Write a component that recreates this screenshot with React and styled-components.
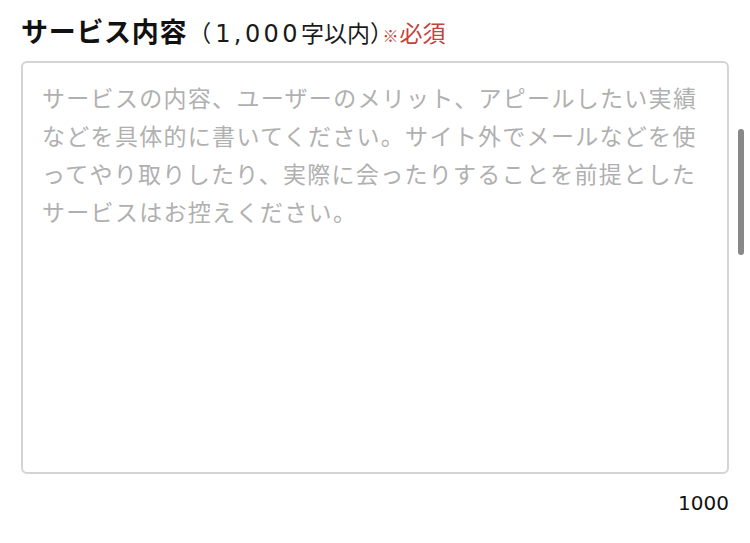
import React from 'react';
import styled, { createGlobalStyle } from 'styled-components';

const GlobalStyle = createGlobalStyle`
    html, body {
        margin: 0;
        padding: 0;
        background: #ffffff;
    }
    body {
        font-family: "Noto Sans CJK JP", "Noto Sans", sans-serif;
        color: #111111;
    }
`;

const MAX = 1000;

const placeholder =
    'サービスの内容、ユーザーのメリット、アピールしたい実績などを具体的に書いてください。サイト外でメールなどを使ってやり取りしたり、実際に会ったりすることを前提としたサービスはお控えください。';

function App() {
    const [text, setText] = React.useState('');

    return (
        <Page>
            <GlobalStyle />
            <Field>
                <Title>
                    <Label>サービス内容</Label>
                    <Limit>
                        <Open>（</Open>
                        <Num>1,000</Num>字以内
                        <Close>）</Close>
                    </Limit>
                    <Required>
                        <Mark>※</Mark>必須
                    </Required>
                </Title>
                <TextBox
                    value={text}
                    maxLength={MAX}
                    placeholder={placeholder}
                    onChange={(e) => setText(e.target.value)}
                />
                <Counter>{MAX - text.length}</Counter>
            </Field>
            <ScrollThumb />
        </Page>
    );
}

export default App;

const Page = styled.div`
    position: relative;
    width: 750px;
    height: 543px;
    overflow: hidden;
`;

const Field = styled.div`
    display: flex;
    flex-direction: column;
    width: 708px;
    padding: 14px 0 0 21px;
`;

const Title = styled.div`
    display: flex;
    align-items: baseline;
    height: 34px;
    line-height: 34px;
    white-space: nowrap;
`;

const Label = styled.span`
    font-size: 27px;
    font-weight: 700;
    letter-spacing: 0.7px;
    color: #111111;
`;

const Limit = styled.span`
    font-size: 23px;
    font-weight: 400;
    color: #1a1a1a;
`;

const Open = styled.span`
    display: inline-block;
    width: 28px;
    padding-right: 4px;
    box-sizing: border-box;
    text-align: right;
`;

const Close = styled.span`
    font-feature-settings: "halt";
    margin-right: 1px;
`;

const Num = styled.span`
    font-family: "DejaVu Sans", sans-serif;
    font-size: 24px;
    letter-spacing: 3.4px;
`;

const Required = styled.span`
    font-size: 23px;
    color: #c4433a;
`;

const Mark = styled.span`
    font-size: 16px;
    margin-right: 1px;
`;

const TextBox = styled.textarea`
    box-sizing: border-box;
    width: 708px;
    height: 413px;
    margin-top: 13px;
    padding: 15px 17px 15px 19px;
    border: 2px solid #d4d4d4;
    border-radius: 6px;
    background: #ffffff;
    font-family: "Noto Sans CJK JP", sans-serif;
    font-size: 23px;
    line-height: 38px;
    letter-spacing: 1.3px;
    color: #222222;
    resize: none;
    outline: none;
    overflow: hidden;

    &::placeholder {
        color: #b0b0b0;
        letter-spacing: 1.3px;
        line-height: 38px;
    }
`;

const Counter = styled.div`
    margin-top: 17px;
    text-align: right;
    font-family: "DejaVu Sans", sans-serif;
    font-size: 20px;
    line-height: 24px;
    color: #111111;
`;

const ScrollThumb = styled.div`
    position: absolute;
    top: 129px;
    right: 6px;
    width: 6px;
    height: 126px;
    border-radius: 3px;
    background: #888888;
`;
